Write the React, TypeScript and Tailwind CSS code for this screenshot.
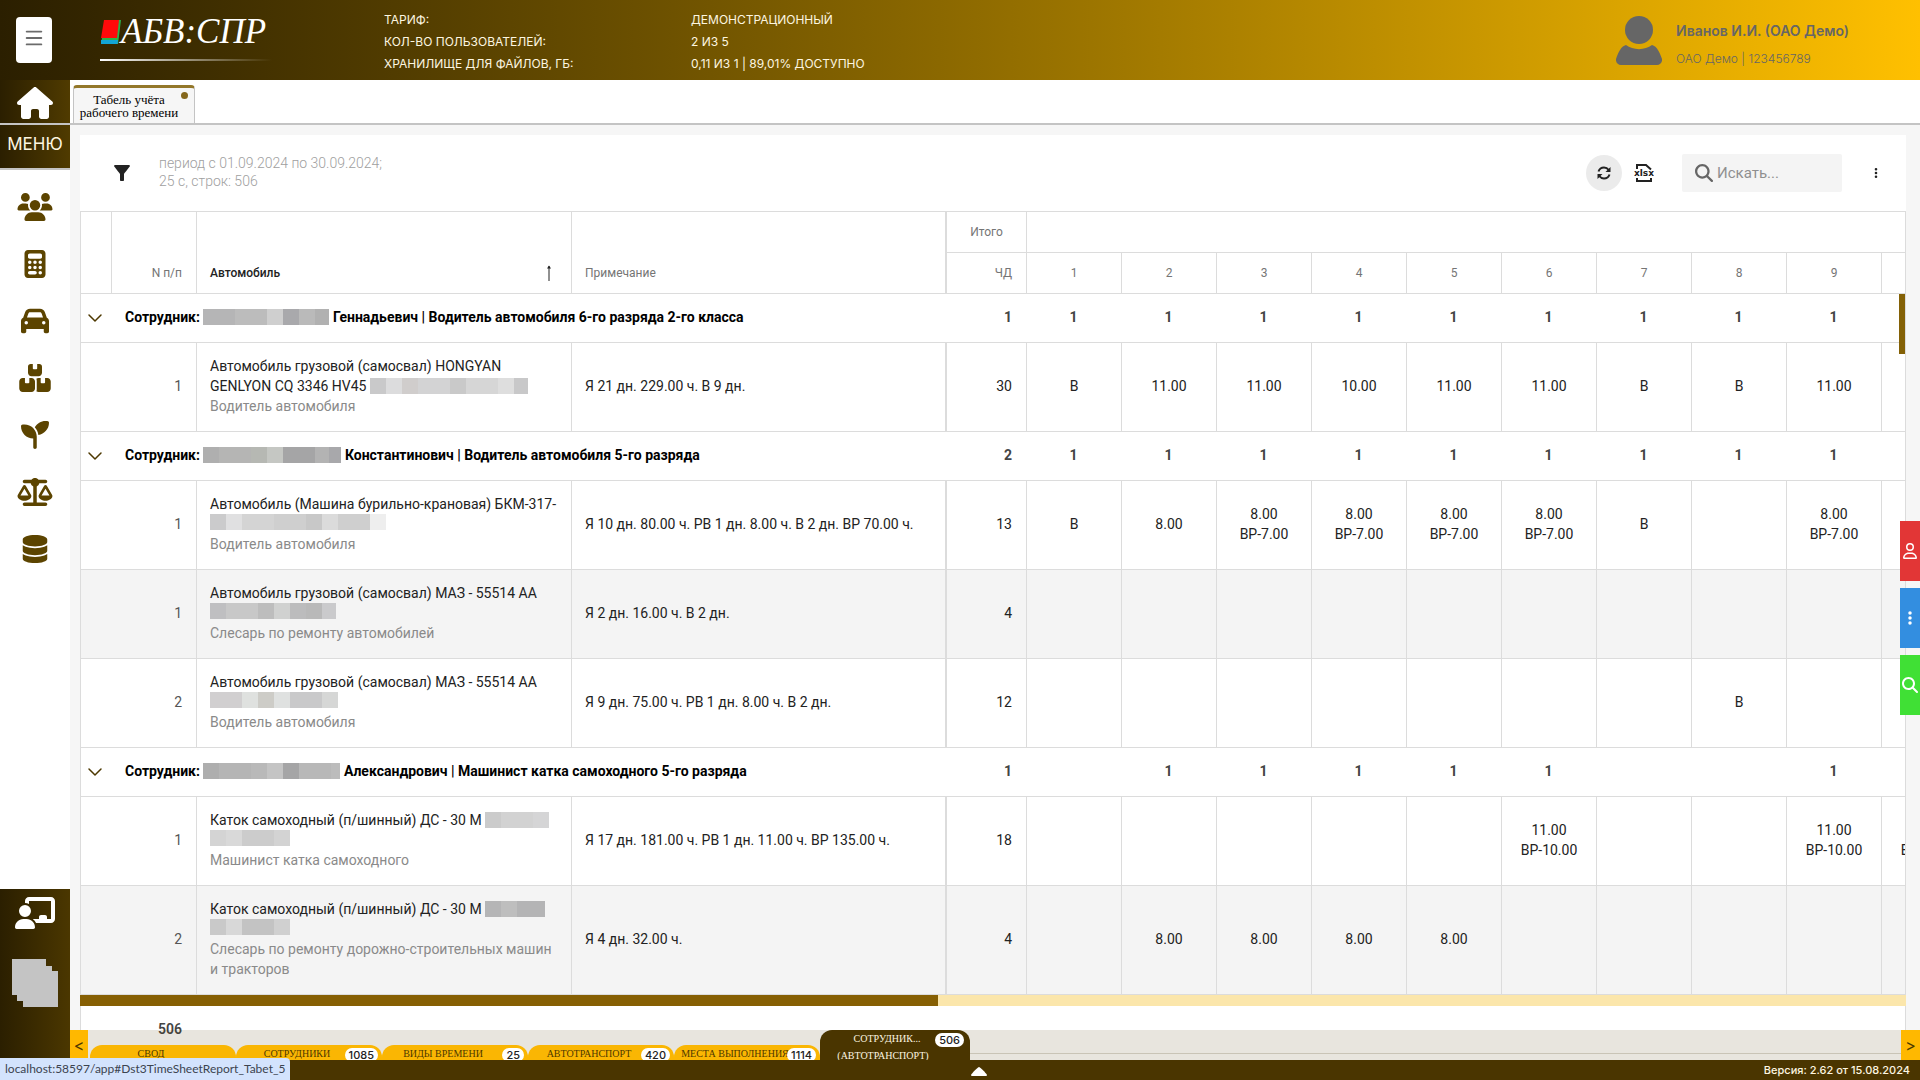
import { FaUsers, FaCalculator, FaCar, FaBoxesStacked, FaSeedling, FaScaleBalanced, FaDatabase, FaChalkboardUser, FaHouse, FaEllipsisVertical, FaMagnifyingGlass, FaRegUser } from 'react-icons/fa6';
import { MdFilterAlt } from 'react-icons/md';
import { ChevronDown, Menu } from 'lucide-react';

type Tile = [width: number, color: string];

type Row = {
  n: number;
  title: string;
  inline?: Tile[];
  below?: Tile[];
  job: string;
  note: string;
  total: number;
  days: string[];
  shaded?: boolean;
};

type Group = {
  mask: Tile[];
  name: string;
  total: number;
  days: string[];
  rows: Row[];
};

const DAYS = ['1', '2', '3', '4', '5', '6', '7', '8', '9', '10'];

const groups: Group[] = [
  {
    mask: [[32, '#b5b5b6'], [32, '#bcbcbc'], [16, '#cfcfcf'], [16, '#a9a9ac'], [16, '#bababa'], [14, '#b1b1b1']],
    name: 'Геннадьевич | Водитель автомобиля 6-го разряда 2-го класса',
    total: 1,
    days: ['1', '1', '1', '1', '1', '1', '1', '1', '1', ''],
    rows: [
      {
        n: 1,
        title: 'Автомобиль грузовой (самосвал) HONGYAN GENLYON CQ 3346 HV45',
        inline: [[16, '#c9c9ca'], [16, '#dcdcdd'], [16, '#d0cdcc'], [32, '#d3d3d4'], [16, '#c9c9c9'], [32, '#d6d6d6'], [16, '#dedede'], [14, '#c8c8c9']],
        job: 'Водитель автомобиля',
        note: 'Я 21 дн. 229.00 ч. В 9 дн.',
        total: 30,
        days: ['В', '11.00', '11.00', '10.00', '11.00', '11.00', 'В', 'В', '11.00', ''],
      },
    ],
  },
  {
    mask: [[16, '#afafaf'], [32, '#b5b5b4'], [16, '#b6b8b3'], [16, '#c5c7c3'], [32, '#a5a5a6'], [14, '#b3b3b3'], [12, '#a8a8ab']],
    name: 'Константинович | Водитель автомобиля 5-го разряда',
    total: 2,
    days: ['1', '1', '1', '1', '1', '1', '1', '1', '1', ''],
    rows: [
      {
        n: 1,
        title: 'Автомобиль (Машина бурильно-крановая) БКМ-317-',
        below: [[16, '#cbcbcc'], [16, '#e0e0e1'], [32, '#d4d4d4'], [32, '#cfcfcf'], [16, '#c8c8c8'], [16, '#dbdbdb'], [32, '#cfcfcf'], [16, '#eeeeee']],
        job: 'Водитель автомобиля',
        note: 'Я 10 дн. 80.00 ч. РВ 1 дн. 8.00 ч. В 2 дн. ВР 70.00 ч.',
        total: 13,
        days: ['В', '8.00', '8.00|ВР-7.00', '8.00|ВР-7.00', '8.00|ВР-7.00', '8.00|ВР-7.00', 'В', '', '8.00|ВР-7.00', ''],
      },
      {
        n: 1,
        title: 'Автомобиль грузовой (самосвал) МАЗ - 55514 АА',
        below: [[16, '#bfbfc1'], [32, '#c8c8c8'], [16, '#bdbdbd'], [16, '#d0d1d0'], [16, '#bcbcbd'], [16, '#b9b9b9'], [14, '#cacacc']],
        job: 'Слесарь по ремонту автомобилей',
        note: 'Я 2 дн. 16.00 ч. В 2 дн.',
        total: 4,
        days: ['', '', '', '', '', '', '', '', '', ''],
        shaded: true,
      },
      {
        n: 2,
        title: 'Автомобиль грузовой (самосвал) МАЗ - 55514 АА',
        below: [[32, '#d1cfd0'], [16, '#dfe1df'], [16, '#cdccc7'], [16, '#dfe1e0'], [32, '#c9c9ca'], [16, '#d6d7d6']],
        job: 'Водитель автомобиля',
        note: 'Я 9 дн. 75.00 ч. РВ 1 дн. 8.00 ч. В 2 дн.',
        total: 12,
        days: ['', '', '', '', '', '', '', 'В', '', ''],
      },
    ],
  },
  {
    mask: [[16, '#aeaeae'], [32, '#b5b5b5'], [16, '#b9b9b9'], [16, '#c4c4c4'], [16, '#a5a5a6'], [32, '#b8b8b8'], [9, '#bcbcbc']],
    name: 'Александрович | Машинист катка самоходного 5-го разряда',
    total: 1,
    days: ['', '1', '1', '1', '1', '1', '', '', '1', ''],
    rows: [
      {
        n: 1,
        title: 'Каток самоходный (п/шинный) ДС - 30 М',
        inline: [[16, '#cbcbcb'], [32, '#d2d2d2'], [16, '#d5d5d6']],
        below: [[16, '#d4d4d4'], [16, '#d9d9d9'], [32, '#cccccc'], [16, '#d3d3d3']],
        job: 'Машинист катка самоходного',
        note: 'Я 17 дн. 181.00 ч. РВ 1 дн. 11.00 ч. ВР 135.00 ч.',
        total: 18,
        days: ['', '', '', '', '', '11.00|ВР-10.00', '', '', '11.00|ВР-10.00', '11.00|ВР-10.00'],
      },
      {
        n: 2,
        title: 'Каток самоходный (п/шинный) ДС - 30 М',
        inline: [[16, '#b5b5b6'], [16, '#bebebe'], [28, '#b4b4b5']],
        below: [[16, '#c9c9c9'], [16, '#d8d8d8'], [32, '#c3c3c3'], [16, '#d0d0d0']],
        job: 'Слесарь по ремонту дорожно-строительных машин и тракторов',
        note: 'Я 4 дн. 32.00 ч.',
        total: 4,
        days: ['', '8.00', '8.00', '8.00', '8.00', '', '', '', '', ''],
        shaded: true,
      },
    ],
  },
];

const menu = [
  { label: 'Сотрудники', Icon: FaUsers },
  { label: 'Расчёты', Icon: FaCalculator },
  { label: 'Транспорт', Icon: FaCar },
  { label: 'Склад', Icon: FaBoxesStacked },
  { label: 'Агро', Icon: FaSeedling },
  { label: 'Баланс', Icon: FaScaleBalanced },
  { label: 'Данные', Icon: FaDatabase },
];

const sheets = [
  { name: 'СВОД', count: '' },
  { name: 'СОТРУДНИКИ', count: '1085' },
  { name: 'ВИДЫ ВРЕМЕНИ', count: '25' },
  { name: 'АВТОТРАНСПОРТ', count: '420' },
  { name: 'МЕСТА ВЫПОЛНЕНИЯ', count: '1114' },
];

const tariff = [
  ['ТАРИФ:', 'ДЕМОНСТРАЦИОННЫЙ'],
  ['КОЛ-ВО ПОЛЬЗОВАТЕЛЕЙ:', '2 ИЗ 5'],
  ['ХРАНИЛИЩЕ ДЛЯ ФАЙЛОВ, ГБ:', '0,11 ИЗ 1 | 89,01% ДОСТУПНО'],
];

function Mask({ tiles }: { tiles: Tile[] }) {
  return (
    <span className="inline-flex h-4 align-text-bottom">
      {tiles.map(([width, color], i) => (
        <span key={i} className="h-4" style={{ width, backgroundColor: color }} />
      ))}
    </span>
  );
}

function Header() {
  return (
    <header className="flex h-20 shrink-0 items-center bg-linear-to-r from-[#2b1f00] to-[#ffc000] text-[#fdf6e0]">
      <button aria-label="Меню" className="mr-12 ml-4 flex h-[46px] w-9 items-center justify-center rounded-sm bg-white pb-1 text-[#6b6b6b]">
        <Menu className="size-[22px]" strokeWidth={2} />
      </button>
      <a href="#home" className="mr-28 flex w-[172px] flex-col gap-1 pb-2.5">
        <span className="flex items-center">
          <svg viewBox="0 0 21 25" className="h-[25px] w-[21px] shrink-0">
            <path d="M5 0H21L18 24H1Z" fill="#2bb24a" />
            <path d="M4 0H19L17 18H1Z" fill="#ff0a0a" />
            <path d="M1 20H18L17.500 24H1Z" fill="#12a5d6" />
          </svg>
          <span className="font-['Liberation_Serif',serif] text-[35px] leading-[46px] text-white italic">АБВ:СПР</span>
        </span>
        <span className="h-[2px] bg-linear-to-r from-white to-transparent" />
      </a>
      <dl className="grid grid-cols-[307px_auto] pt-1 text-xs leading-[22px]">
        {tariff.map(([k, v]) => (
          <div key={k} className="contents">
            <dt>{k}</dt>
            <dd>{v}</dd>
          </div>
        ))}
      </dl>
      <div className="ml-auto flex w-[304px] items-center gap-3.5 text-[#666]">
        <svg viewBox="0 0 46 49" className="h-[49px] w-[46px] shrink-0" fill="currentColor">
          <circle cx="23" cy="14" r="14" />
          <path d="M10 29C17 34.500 29 34.500 36 29C41 30 44 37 46 43C46.500 46.500 44 49 41 49H5C2 49 -0.500 46.500 0 43C2 37 5 30 10 29Z" />
        </svg>
        <div className="pt-2.5">
          <div className="text-[14px] leading-[28px] font-semibold whitespace-nowrap">Иванов И.И. (ОАО Демо)</div>
          <div className="text-[12px] leading-[28px] font-light">ОАО Демо | 123456789</div>
        </div>
      </div>
    </header>
  );
}

function Sidebar() {
  return (
    <aside className="flex w-[70px] shrink-0 flex-col bg-white">
      <a href="#home" aria-label="Главная" className="flex h-[45px] items-center justify-center border-b-2 border-[#c4c4c4] bg-linear-to-r from-[#2b1f00] to-[#503b00] pt-0.5 text-white">
        <FaHouse className="h-8 w-10" />
      </a>
      <button className="h-[45px] border-b-2 border-[#c4c4c4] bg-linear-to-r from-[#2b1f00] to-[#503b00] pb-1 text-[17px] text-[#fdf6e0]">МЕНЮ</button>
      <nav className="flex flex-col pt-2 text-[#5c4400]">
        {menu.map(({ label, Icon }) => (
          <a key={label} href="#menu" aria-label={label} className="flex h-[57px] items-center justify-center">
            <Icon className="h-7 w-9" />
          </a>
        ))}
      </nav>
      <div className="mt-auto flex h-[171px] flex-col items-center overflow-hidden bg-linear-to-r from-[#2b1f00] to-[#4b3700] pt-2 text-white">
        <button aria-label="Обучение">
          <FaChalkboardUser className="h-8 w-10" />
        </button>
        <svg viewBox="0 0 46 48" className="mt-[30px] h-12 w-[46px] shrink-0" fill="#c4c4c4">
          <path d="M0 0H34V7H40V12H46V48H11V42H5V36H0Z" />
        </svg>
        <span className="mt-12 text-[11px]">АБВ</span>
      </div>
    </aside>
  );
}

function RefreshIcon() {
  return (
    <svg viewBox="0 0 16 16" className="size-4" fill="none" stroke="currentColor" strokeWidth="2">
      <path d="M2.500 6.500C3.500 3.500 5.500 2.500 8 2.500C10 2.500 11.500 3.300 12.800 5" />
      <path d="M13.500 9.500C12.500 12.500 10.500 13.500 8 13.500C6 13.500 4.500 12.700 3.200 11" />
      <path d="M14.500 2V7H9.500Z" fill="currentColor" stroke="none" />
      <path d="M1.500 14V9H6.500Z" fill="currentColor" stroke="none" />
    </svg>
  );
}

function XlsxIcon() {
  return (
    <svg viewBox="0 0 20 20" className="size-5" fill="none" stroke="currentColor" strokeWidth="2">
      <path d="M3 6V2H12L17 6.500" />
      <path d="M3 15V18H17V15" />
      <text x="10" y="13" textAnchor="middle" fontSize="9" fontWeight="700" fontFamily="DejaVu Sans" fill="currentColor" stroke="none">xlsx</text>
    </svg>
  );
}

function Toolbar() {
  return (
    <div className="flex h-[76px] shrink-0 items-center pr-5 pl-[30px] text-[#222]">
      <button aria-label="Фильтр">
        <MdFilterAlt className="size-6" />
      </button>
      <p className="ml-[25px] pb-0.5 text-sm leading-[18px] font-light text-[#a0a0a0]">
        период с 01.09.2024 по 30.09.2024;
        <br />
        25 с, строк: 506
      </p>
      <button aria-label="Обновить" className="ml-auto flex size-9 items-center justify-center rounded-full bg-[#ebebeb]">
        <RefreshIcon />
      </button>
      <button aria-label="Экспорт в Excel" className="ml-3">
        <XlsxIcon />
      </button>
      <label className="ml-7 flex h-[38px] w-40 items-center gap-1 rounded-xs bg-[#f4f4f4] pl-[13px] text-[#666]">
        <FaMagnifyingGlass className="size-[18px] shrink-0" />
        <input type="search" aria-label="Поиск" placeholder="Искать..." className="w-full min-w-0 bg-transparent text-[15px] outline-none placeholder:text-[#8f8f8f]" />
      </label>
      <button aria-label="Ещё" className="ml-6 flex w-5 justify-center">
        <FaEllipsisVertical className="size-3" />
      </button>
    </div>
  );
}

const cell = 'border-r border-b border-[#dcdcdc]';

function DataRow({ row }: { row: Row }) {
  return (
    <tr className={row.shaded ? 'bg-[#f4f4f4]' : 'bg-white'}>
      <td colSpan={2} className={`${cell} pr-3.5 pb-0.5 text-right text-[#555]`}>{row.n}</td>
      <td className={`${cell} px-[13px] pt-[13px] pb-[15px] leading-5`}>
        {row.title} {row.inline && <Mask tiles={row.inline} />}
        {row.below && <div className="flex h-5 items-start"><Mask tiles={row.below} /></div>}
        <div className="text-[#8a8a8a]">{row.job}</div>
      </td>
      <td className="border-r-2 border-b border-[#dcdcdc] px-[13px] pb-0.5">{row.note}</td>
      <td className={`${cell} pr-3.5 pb-0.5 text-right`}>{row.total}</td>
      {row.days.map((d, i) => (
        <td key={i} className={`${cell} pb-0.5 text-center leading-5`}>
          {d.split('|').map((line) => <div key={line}>{line}</div>)}
        </td>
      ))}
    </tr>
  );
}

function Timesheet() {
  return (
    <table className="w-[1897px] table-fixed border-separate border-spacing-0 border-t border-l border-[#dcdcdc] text-sm text-[#222]">
      <colgroup>
        <col className="w-[31px]" />
        <col className="w-[85px]" />
        <col className="w-[375px]" />
        <col className="w-[375px]" />
        <col className="w-[80px]" />
        {DAYS.map((d) => <col key={d} className="w-[95px]" />)}
      </colgroup>
      <thead className="text-xs text-[#757575]">
        <tr className="h-[41px]">
          <th rowSpan={2} aria-label="Группа" className={cell} />
          <th rowSpan={2} className={`${cell} pr-3.5 pb-3 text-right align-bottom font-normal`}>N п/п</th>
          <th rowSpan={2} className={`${cell} px-[13px] pb-3 align-bottom font-medium text-[#222]`}>
            <div className="flex items-center justify-between pr-1.5">
              Автомобиль
              <svg viewBox="0 0 6 16" className="h-4 w-1.5" fill="none" stroke="#222">
                <path d="M3 1V16" />
                <path d="M3 0.500L5 3.500H1Z" fill="#222" stroke="none" />
              </svg>
            </div>
          </th>
          <th rowSpan={2} className="border-r-2 border-b border-[#dcdcdc] px-[13px] pb-3 text-left align-bottom font-normal">Примечание</th>
          <th className={`${cell} font-normal`}>Итого</th>
          <th colSpan={10} aria-label="Дни месяца" className={cell} />
        </tr>
        <tr className="h-[41px]">
          <th className={`${cell} pr-3.5 text-right font-normal`}>ЧД</th>
          {DAYS.map((d) => <th key={d} className={`${cell} font-normal`}>{d}</th>)}
        </tr>
      </thead>
      {groups.map((g) => (
        <tbody key={g.name}>
          <tr className="h-[49px] font-bold">
            <td className="border-b border-[#dcdcdc]">
              <button aria-label="Свернуть группу" className="flex w-full justify-center pr-1 text-[#4d3800]">
                <ChevronDown className="size-6 shrink-0" strokeWidth={1.5} />
              </button>
            </td>
            <td colSpan={3} className="border-b border-[#dcdcdc] pb-0.5 pl-[13px] text-black">
              Сотрудник: <Mask tiles={g.mask} /> {g.name}
            </td>
            <td className="border-b border-[#dcdcdc] pr-[15px] pb-0.5 text-right font-bold text-[#444]">{g.total}</td>
            {g.days.map((d, i) => <td key={i} className="border-b border-[#dcdcdc] pr-0.5 pb-0.5 text-center font-bold text-[#444]">{d}</td>)}
          </tr>
          {g.rows.map((r, i) => <DataRow key={i} row={r} />)}
        </tbody>
      ))}
    </table>
  );
}

function Badge({ children }: { children: string }) {
  return <span className="rounded-full bg-white px-1 font-['Inter',sans-serif] text-[11px] leading-[15px] font-medium text-[#222]">{children}</span>;
}

function SheetTabs() {
  return (
    <div className="absolute inset-x-0 bottom-0 flex h-[30px] items-stretch overflow-hidden bg-[#4d3800]/13">
      <button aria-label="Назад" className="w-[18px] shrink-0 bg-[#ffb800] text-base text-[#4d3800]">&lt;</button>
      <div className="flex flex-1 items-end pl-0.5 font-['Liberation_Serif',serif] text-[10px]">
        {sheets.map((s) => (
          <button key={s.name} className="relative h-[15px] w-[146px] rounded-t-xl bg-[#fab603] text-center leading-[17px] whitespace-nowrap text-[#4d3800]">
            <span className="mr-6">{s.name}</span>
            {s.count && <span className="absolute top-[3px] right-1 leading-[15px]"><Badge>{s.count}</Badge></span>}
          </button>
        ))}
        <button className="relative flex h-full w-[150px] flex-col items-center rounded-t-xl bg-[#4a3500] pr-6 leading-[17px] text-[#fdf6e0]">
          <span className="pl-2">СОТРУДНИК...</span>
          <span>(АВТОТРАНСПОРТ)</span>
          <span className="absolute top-0.5 right-1.5"><Badge>506</Badge></span>
        </button>
        <div className="mb-1.5 h-px flex-1 bg-[#c9c4b6]" />
      </div>
      <button aria-label="Вперёд" className="w-[19px] shrink-0 bg-[#ffb800] text-base text-[#4d3800]">&gt;</button>
    </div>
  );
}

export default function App() {
  return (
    <div className="relative flex h-screen flex-col overflow-hidden bg-white font-['Inter',sans-serif]">
      <Header />
      <div className="flex min-h-0 flex-1">
        <Sidebar />
        <main className="relative flex min-w-0 flex-1 flex-col bg-[#f6f6f6]">
          <div className="flex h-[45px] shrink-0 items-end border-b-2 border-[#c4c4c4] bg-white pl-[3px]">
            <button className="relative h-[38px] w-[122px] rounded-t-sm border-x border-t-3 border-x-[#c4c4c4] border-t-[#93772a] bg-[#f6f6f6] pr-2.5 font-['Liberation_Serif',serif] text-[13px] leading-[13px] text-black">
              Табель учёта рабочего времени
              <span className="absolute top-1 right-1.5 size-[7px] rounded-full bg-[#85671c]" />
            </button>
          </div>
          <div className="mt-2.5 mr-3.5 ml-2.5 flex min-h-0 flex-1 flex-col bg-white font-['Roboto',sans-serif]">
            <Toolbar />
            <div className="relative overflow-hidden border-r border-[#dcdcdc]">
              <Timesheet />
              <div className="absolute top-[83px] right-0 h-[60px] w-1.5 bg-[#846106]" />
            </div>
            <div className="h-[11px] shrink-0 bg-[#fbe6ab]">
              <div className="h-full w-[47%] bg-[#865f03]" />
            </div>
            <div className="flex-1 border-x border-[#dcdcdc] pt-[13px] text-sm font-semibold text-[#444]">
              <div className="w-[101px] text-right">506</div>
            </div>
          </div>
          <SheetTabs />
        </main>
      </div>
      <footer className="flex h-5 shrink-0 items-center justify-end bg-[#4a3500] px-2.5 text-[11px] font-medium text-[#fdf6e0]">
        Версия: 2.62 от 15.08.2024
      </footer>
      <svg viewBox="0 0 16 9" className="absolute bottom-1 left-[51%] h-[9px] w-4 -translate-x-1/2" fill="#fff">
        <path d="M8 0C9 0 15 6 16 8C16 9 15 9 14 9H2C1 9 0 9 0 8C1 6 7 0 8 0Z" />
      </svg>
      <div className="absolute top-[521px] right-0 flex w-5 flex-col gap-[7px] text-white">
        <button aria-label="Профиль" className="flex h-[60px] items-center justify-center bg-[#e23636]"><FaRegUser className="size-4" /></button>
        <button aria-label="Действия" className="flex h-[60px] items-center justify-center bg-[#338ee0]"><FaEllipsisVertical className="size-4" /></button>
        <button aria-label="Найти" className="flex h-[60px] items-center justify-center bg-[#40e035]"><FaMagnifyingGlass className="size-4" /></button>
      </div>
      <div className="absolute bottom-0 left-0 rounded-tr-sm bg-[#d3e3fd] px-[5px] font-['Lato',sans-serif] text-xs leading-[22px] text-[#3c4450]">
        localhost:58597/app#Dst3TimeSheetReport_Tabet_5
      </div>
    </div>
  );
}
